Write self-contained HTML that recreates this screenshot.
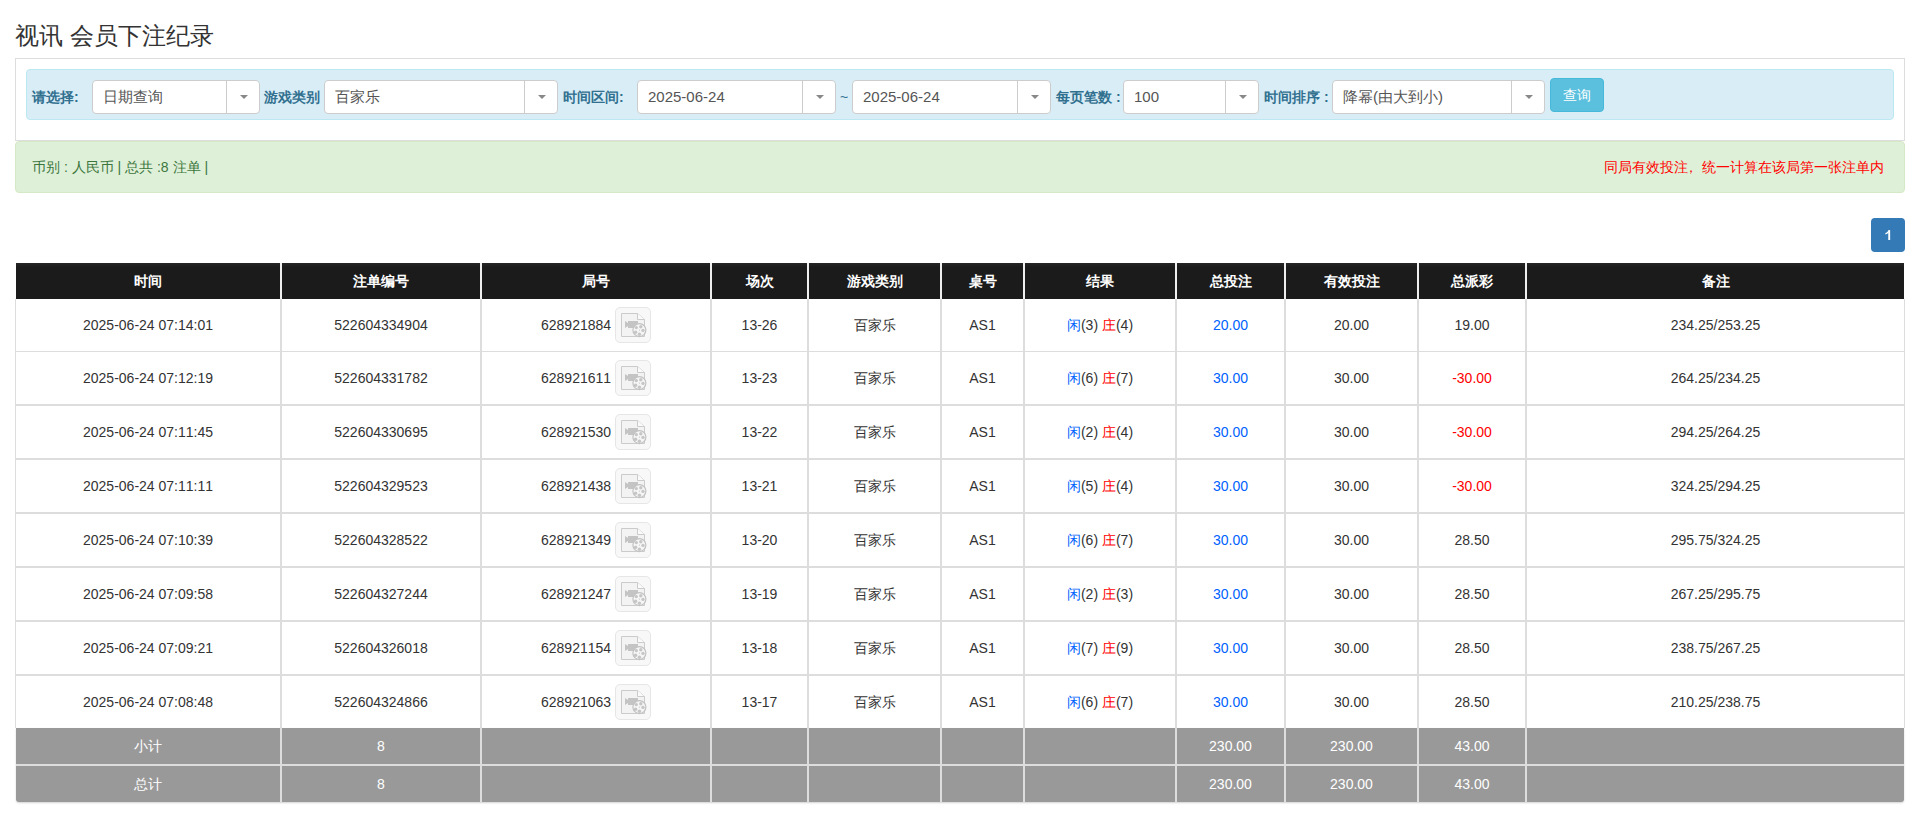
<!DOCTYPE html>
<html><head><meta charset="utf-8"><title>视讯 会员下注纪录</title>
<style>
html,body{margin:0;padding:0;background:#fff;}
body{width:1916px;height:828px;overflow:hidden;position:relative;font-family:"Liberation Sans",sans-serif;font-size:14px;color:#333;font-kerning:none;}
.abs{position:absolute;}
h3{position:absolute;left:15px;top:19px;margin:0;font-size:24px;font-weight:normal;line-height:34px;color:#333;white-space:nowrap;}
.panel{position:absolute;left:15px;top:58px;width:1888px;height:81px;border:1px solid #ddd;}
.bar{position:absolute;left:26px;top:69px;width:1866px;height:49px;border:1px solid #bce8f1;background:#d9edf7;border-radius:4px;}
.lbl{position:absolute;top:80px;height:34px;line-height:34px;font-weight:bold;color:#31708f;white-space:nowrap;}
.sel{position:absolute;top:80px;height:32px;border:1px solid #ccc;border-radius:4px;background:#fff;box-sizing:content-box;}
.sel .t{position:absolute;left:10px;top:0;line-height:32px;font-size:15px;color:#555;white-space:nowrap;}
.sel .d{position:absolute;right:32px;top:0;width:1px;height:32px;background:#ccc;}
.sel .a{position:absolute;right:11px;top:14px;width:0;height:0;border-left:4px solid transparent;border-right:4px solid transparent;border-top:4.5px solid #888;}
.btn{position:absolute;left:1550px;top:78px;width:52px;height:32px;border:1px solid #46b8da;background:#5bc0de;border-radius:4px;color:#fff;text-align:center;line-height:32px;}
.alert{position:absolute;left:15px;top:141px;width:1888px;height:50px;border:1px solid #d6e9c6;background:#dff0d8;border-radius:4px;color:#3c763d;line-height:50px;}
.alert .l{position:absolute;left:16px;top:0;white-space:nowrap;}
.alert .r{position:absolute;right:20px;top:0;color:#f00;white-space:nowrap;}
.page{position:absolute;left:1871px;top:218px;width:34px;height:34px;background:#337ab7;border-radius:4px;color:#fff;font-size:14px;-webkit-text-stroke:0.5px #fff;text-align:center;line-height:34px;}
.tbl{position:absolute;left:15px;top:263px;width:1890px;height:539px;}
.c{position:absolute;text-align:center;white-space:nowrap;}
.h{background:#1c1c1c;color:#fff;font-weight:bold;}
.g{background:#999;color:#fff;}
.hh{color:#fff;font-weight:bold;}
.gw{color:#fff;}
.ico{display:inline-block;vertical-align:middle;width:36px;height:36px;box-sizing:border-box;border:1px solid #e6e6e6;border-radius:5px;background:#f8f8f8;position:relative;top:-1px;}
.ico svg{position:absolute;left:-1px;top:-1px;}
.bl{color:#0062ff;}
.rd{color:#f00;}
</style></head><body>
<h3>视讯 会员下注纪录</h3>
<div class="panel"></div>
<div class="bar"></div>

<div class="lbl" style="left:32px">请选择:</div>
<div class="sel" style="left:92px;width:166px"><span class="t">日期查询</span><span class="d"></span><span class="a"></span></div>
<div class="lbl" style="left:264px">游戏类别</div>
<div class="sel" style="left:324px;width:232px"><span class="t">百家乐</span><span class="d"></span><span class="a"></span></div>
<div class="lbl" style="left:563px">时间区间:</div>
<div class="sel" style="left:637px;width:197px"><span class="t">2025-06-24</span><span class="d"></span><span class="a"></span></div>
<div class="lbl" style="left:840px;font-weight:normal">~</div>
<div class="sel" style="left:852px;width:197px"><span class="t">2025-06-24</span><span class="d"></span><span class="a"></span></div>
<div class="lbl" style="left:1056px">每页笔数 :</div>
<div class="sel" style="left:1123px;width:134px"><span class="t">100</span><span class="d"></span><span class="a"></span></div>
<div class="lbl" style="left:1264px">时间排序 :</div>
<div class="sel" style="left:1332px;width:211px"><span class="t">降幂(由大到小)</span><span class="d"></span><span class="a"></span></div>
<div class="btn">查询</div>
<div class="alert"><span class="l">币别 : 人民币 | 总共 :8 注单 |</span><span class="r">同局有效投注<span style="position:relative;left:-4px">，</span>统一计算在该局第一张注单内</span></div>
<div class="page"><svg width="34" height="34" style="position:absolute;left:0;top:0"><path d="M18.2 12.2V22" stroke="#fff" stroke-width="1.9" fill="none"/><path d="M19 12.1l-1.5 0.3c-0.6 1.2-1.8 2.1-3.1 2.6v1.5c1.3-0.4 2.4-1.1 3.3-2z" fill="#fff"/></svg></div>
<div class="abs" style="left:15px;top:299px;width:1px;height:429px;background:#ddd"></div>
<div class="abs" style="left:1904px;top:299px;width:1px;height:429px;background:#ddd"></div>
<div class="abs" style="left:16px;top:263px;width:1888px;height:36px;background:linear-gradient(#262626,#1b1b1b 4px)"></div>
<div class="c hh" style="left:16px;top:263px;width:264px;height:36px;line-height:36px">时间</div>
<div class="c hh" style="left:282px;top:263px;width:198px;height:36px;line-height:36px">注单编号</div>
<div class="c hh" style="left:482px;top:263px;width:228px;height:36px;line-height:36px">局号</div>
<div class="c hh" style="left:712px;top:263px;width:95px;height:36px;line-height:36px">场次</div>
<div class="c hh" style="left:809px;top:263px;width:131px;height:36px;line-height:36px">游戏类别</div>
<div class="c hh" style="left:942px;top:263px;width:81px;height:36px;line-height:36px">桌号</div>
<div class="c hh" style="left:1025px;top:263px;width:150px;height:36px;line-height:36px">结果</div>
<div class="c hh" style="left:1177px;top:263px;width:107px;height:36px;line-height:36px">总投注</div>
<div class="c hh" style="left:1286px;top:263px;width:131px;height:36px;line-height:36px">有效投注</div>
<div class="c hh" style="left:1419px;top:263px;width:106px;height:36px;line-height:36px">总派彩</div>
<div class="c hh" style="left:1527px;top:263px;width:377px;height:36px;line-height:36px">备注</div>
<div class="abs" style="left:280px;top:263px;width:2px;height:36px;background:#efefef"></div>
<div class="abs" style="left:480px;top:263px;width:2px;height:36px;background:#efefef"></div>
<div class="abs" style="left:710px;top:263px;width:2px;height:36px;background:#efefef"></div>
<div class="abs" style="left:807px;top:263px;width:2px;height:36px;background:#efefef"></div>
<div class="abs" style="left:940px;top:263px;width:2px;height:36px;background:#efefef"></div>
<div class="abs" style="left:1023px;top:263px;width:2px;height:36px;background:#efefef"></div>
<div class="abs" style="left:1175px;top:263px;width:2px;height:36px;background:#efefef"></div>
<div class="abs" style="left:1284px;top:263px;width:2px;height:36px;background:#efefef"></div>
<div class="abs" style="left:1417px;top:263px;width:2px;height:36px;background:#efefef"></div>
<div class="abs" style="left:1525px;top:263px;width:2px;height:36px;background:#efefef"></div>
<div class="abs" style="left:16px;top:351px;width:1888px;height:1px;background:#ddd"></div>
<div class="abs" style="left:16px;top:404px;width:1888px;height:2px;background:#ddd"></div>
<div class="abs" style="left:16px;top:458px;width:1888px;height:2px;background:#ddd"></div>
<div class="abs" style="left:16px;top:512px;width:1888px;height:2px;background:#ddd"></div>
<div class="abs" style="left:16px;top:566px;width:1888px;height:2px;background:#ddd"></div>
<div class="abs" style="left:16px;top:620px;width:1888px;height:2px;background:#ddd"></div>
<div class="abs" style="left:16px;top:674px;width:1888px;height:2px;background:#ddd"></div>
<div class="abs" style="left:280px;top:299px;width:2px;height:429px;background:#ddd"></div>
<div class="abs" style="left:480px;top:299px;width:2px;height:429px;background:#ddd"></div>
<div class="abs" style="left:710px;top:299px;width:2px;height:429px;background:#ddd"></div>
<div class="abs" style="left:807px;top:299px;width:2px;height:429px;background:#ddd"></div>
<div class="abs" style="left:940px;top:299px;width:2px;height:429px;background:#ddd"></div>
<div class="abs" style="left:1023px;top:299px;width:2px;height:429px;background:#ddd"></div>
<div class="abs" style="left:1175px;top:299px;width:2px;height:429px;background:#ddd"></div>
<div class="abs" style="left:1284px;top:299px;width:2px;height:429px;background:#ddd"></div>
<div class="abs" style="left:1417px;top:299px;width:2px;height:429px;background:#ddd"></div>
<div class="abs" style="left:1525px;top:299px;width:2px;height:429px;background:#ddd"></div>
<div class="c " style="left:16px;top:299px;width:264px;height:52px;line-height:52px">2025-06-24 07:14:01</div>
<div class="c " style="left:282px;top:299px;width:198px;height:52px;line-height:52px">522604334904</div>
<div class="c " style="left:482px;top:299px;width:228px;height:52px;line-height:52px">628921884 <span class="ico"><svg width="36" height="36" viewBox="0 0 36 36"><path d="M6.5 6.5h16l7 6v17h-23z" fill="#f3f3f3" stroke="#cbcbcb" stroke-width="1"/><path d="M22.5 6.5v6h7" fill="#fafafa" stroke="#cbcbcb" stroke-width="1"/><path d="M10 14l3 2v-2h10v7h-10v-2l-3 2z" fill="#c4c4c4"/><circle cx="24.4" cy="23.1" r="6.5" fill="#f6f6f6" stroke="#c2c2c2" stroke-width="1.2"/><circle cx="21.3" cy="20.6" r="1.7" fill="#c6c6c6"/><circle cx="25.8" cy="19.8" r="1.7" fill="#c6c6c6"/><circle cx="28" cy="23.4" r="1.7" fill="#c6c6c6"/><circle cx="24.4" cy="27.2" r="1.7" fill="#c6c6c6"/><circle cx="20.6" cy="25.2" r="1.7" fill="#c6c6c6"/><circle cx="24.4" cy="23.1" r="0.6" fill="#c4c4c4"/></svg></span></div>
<div class="c " style="left:712px;top:299px;width:95px;height:52px;line-height:52px">13-26</div>
<div class="c " style="left:809px;top:299px;width:131px;height:52px;line-height:52px">百家乐</div>
<div class="c " style="left:942px;top:299px;width:81px;height:52px;line-height:52px">AS1</div>
<div class="c " style="left:1025px;top:299px;width:150px;height:52px;line-height:52px"><span class="bl">闲</span>(3) <span class="rd">庄</span>(4)</div>
<div class="c " style="left:1177px;top:299px;width:107px;height:52px;line-height:52px"><span class="bl">20.00</span></div>
<div class="c " style="left:1286px;top:299px;width:131px;height:52px;line-height:52px">20.00</div>
<div class="c " style="left:1419px;top:299px;width:106px;height:52px;line-height:52px">19.00</div>
<div class="c " style="left:1527px;top:299px;width:377px;height:52px;line-height:52px">234.25/253.25</div>
<div class="c " style="left:16px;top:352px;width:264px;height:52px;line-height:52px">2025-06-24 07:12:19</div>
<div class="c " style="left:282px;top:352px;width:198px;height:52px;line-height:52px">522604331782</div>
<div class="c " style="left:482px;top:352px;width:228px;height:52px;line-height:52px">628921611 <span class="ico"><svg width="36" height="36" viewBox="0 0 36 36"><path d="M6.5 6.5h16l7 6v17h-23z" fill="#f3f3f3" stroke="#cbcbcb" stroke-width="1"/><path d="M22.5 6.5v6h7" fill="#fafafa" stroke="#cbcbcb" stroke-width="1"/><path d="M10 14l3 2v-2h10v7h-10v-2l-3 2z" fill="#c4c4c4"/><circle cx="24.4" cy="23.1" r="6.5" fill="#f6f6f6" stroke="#c2c2c2" stroke-width="1.2"/><circle cx="21.3" cy="20.6" r="1.7" fill="#c6c6c6"/><circle cx="25.8" cy="19.8" r="1.7" fill="#c6c6c6"/><circle cx="28" cy="23.4" r="1.7" fill="#c6c6c6"/><circle cx="24.4" cy="27.2" r="1.7" fill="#c6c6c6"/><circle cx="20.6" cy="25.2" r="1.7" fill="#c6c6c6"/><circle cx="24.4" cy="23.1" r="0.6" fill="#c4c4c4"/></svg></span></div>
<div class="c " style="left:712px;top:352px;width:95px;height:52px;line-height:52px">13-23</div>
<div class="c " style="left:809px;top:352px;width:131px;height:52px;line-height:52px">百家乐</div>
<div class="c " style="left:942px;top:352px;width:81px;height:52px;line-height:52px">AS1</div>
<div class="c " style="left:1025px;top:352px;width:150px;height:52px;line-height:52px"><span class="bl">闲</span>(6) <span class="rd">庄</span>(7)</div>
<div class="c " style="left:1177px;top:352px;width:107px;height:52px;line-height:52px"><span class="bl">30.00</span></div>
<div class="c " style="left:1286px;top:352px;width:131px;height:52px;line-height:52px">30.00</div>
<div class="c " style="left:1419px;top:352px;width:106px;height:52px;line-height:52px"><span class="rd">-30.00</span></div>
<div class="c " style="left:1527px;top:352px;width:377px;height:52px;line-height:52px">264.25/234.25</div>
<div class="c " style="left:16px;top:406px;width:264px;height:52px;line-height:52px">2025-06-24 07:11:45</div>
<div class="c " style="left:282px;top:406px;width:198px;height:52px;line-height:52px">522604330695</div>
<div class="c " style="left:482px;top:406px;width:228px;height:52px;line-height:52px">628921530 <span class="ico"><svg width="36" height="36" viewBox="0 0 36 36"><path d="M6.5 6.5h16l7 6v17h-23z" fill="#f3f3f3" stroke="#cbcbcb" stroke-width="1"/><path d="M22.5 6.5v6h7" fill="#fafafa" stroke="#cbcbcb" stroke-width="1"/><path d="M10 14l3 2v-2h10v7h-10v-2l-3 2z" fill="#c4c4c4"/><circle cx="24.4" cy="23.1" r="6.5" fill="#f6f6f6" stroke="#c2c2c2" stroke-width="1.2"/><circle cx="21.3" cy="20.6" r="1.7" fill="#c6c6c6"/><circle cx="25.8" cy="19.8" r="1.7" fill="#c6c6c6"/><circle cx="28" cy="23.4" r="1.7" fill="#c6c6c6"/><circle cx="24.4" cy="27.2" r="1.7" fill="#c6c6c6"/><circle cx="20.6" cy="25.2" r="1.7" fill="#c6c6c6"/><circle cx="24.4" cy="23.1" r="0.6" fill="#c4c4c4"/></svg></span></div>
<div class="c " style="left:712px;top:406px;width:95px;height:52px;line-height:52px">13-22</div>
<div class="c " style="left:809px;top:406px;width:131px;height:52px;line-height:52px">百家乐</div>
<div class="c " style="left:942px;top:406px;width:81px;height:52px;line-height:52px">AS1</div>
<div class="c " style="left:1025px;top:406px;width:150px;height:52px;line-height:52px"><span class="bl">闲</span>(2) <span class="rd">庄</span>(4)</div>
<div class="c " style="left:1177px;top:406px;width:107px;height:52px;line-height:52px"><span class="bl">30.00</span></div>
<div class="c " style="left:1286px;top:406px;width:131px;height:52px;line-height:52px">30.00</div>
<div class="c " style="left:1419px;top:406px;width:106px;height:52px;line-height:52px"><span class="rd">-30.00</span></div>
<div class="c " style="left:1527px;top:406px;width:377px;height:52px;line-height:52px">294.25/264.25</div>
<div class="c " style="left:16px;top:460px;width:264px;height:52px;line-height:52px">2025-06-24 07:11:11</div>
<div class="c " style="left:282px;top:460px;width:198px;height:52px;line-height:52px">522604329523</div>
<div class="c " style="left:482px;top:460px;width:228px;height:52px;line-height:52px">628921438 <span class="ico"><svg width="36" height="36" viewBox="0 0 36 36"><path d="M6.5 6.5h16l7 6v17h-23z" fill="#f3f3f3" stroke="#cbcbcb" stroke-width="1"/><path d="M22.5 6.5v6h7" fill="#fafafa" stroke="#cbcbcb" stroke-width="1"/><path d="M10 14l3 2v-2h10v7h-10v-2l-3 2z" fill="#c4c4c4"/><circle cx="24.4" cy="23.1" r="6.5" fill="#f6f6f6" stroke="#c2c2c2" stroke-width="1.2"/><circle cx="21.3" cy="20.6" r="1.7" fill="#c6c6c6"/><circle cx="25.8" cy="19.8" r="1.7" fill="#c6c6c6"/><circle cx="28" cy="23.4" r="1.7" fill="#c6c6c6"/><circle cx="24.4" cy="27.2" r="1.7" fill="#c6c6c6"/><circle cx="20.6" cy="25.2" r="1.7" fill="#c6c6c6"/><circle cx="24.4" cy="23.1" r="0.6" fill="#c4c4c4"/></svg></span></div>
<div class="c " style="left:712px;top:460px;width:95px;height:52px;line-height:52px">13-21</div>
<div class="c " style="left:809px;top:460px;width:131px;height:52px;line-height:52px">百家乐</div>
<div class="c " style="left:942px;top:460px;width:81px;height:52px;line-height:52px">AS1</div>
<div class="c " style="left:1025px;top:460px;width:150px;height:52px;line-height:52px"><span class="bl">闲</span>(5) <span class="rd">庄</span>(4)</div>
<div class="c " style="left:1177px;top:460px;width:107px;height:52px;line-height:52px"><span class="bl">30.00</span></div>
<div class="c " style="left:1286px;top:460px;width:131px;height:52px;line-height:52px">30.00</div>
<div class="c " style="left:1419px;top:460px;width:106px;height:52px;line-height:52px"><span class="rd">-30.00</span></div>
<div class="c " style="left:1527px;top:460px;width:377px;height:52px;line-height:52px">324.25/294.25</div>
<div class="c " style="left:16px;top:514px;width:264px;height:52px;line-height:52px">2025-06-24 07:10:39</div>
<div class="c " style="left:282px;top:514px;width:198px;height:52px;line-height:52px">522604328522</div>
<div class="c " style="left:482px;top:514px;width:228px;height:52px;line-height:52px">628921349 <span class="ico"><svg width="36" height="36" viewBox="0 0 36 36"><path d="M6.5 6.5h16l7 6v17h-23z" fill="#f3f3f3" stroke="#cbcbcb" stroke-width="1"/><path d="M22.5 6.5v6h7" fill="#fafafa" stroke="#cbcbcb" stroke-width="1"/><path d="M10 14l3 2v-2h10v7h-10v-2l-3 2z" fill="#c4c4c4"/><circle cx="24.4" cy="23.1" r="6.5" fill="#f6f6f6" stroke="#c2c2c2" stroke-width="1.2"/><circle cx="21.3" cy="20.6" r="1.7" fill="#c6c6c6"/><circle cx="25.8" cy="19.8" r="1.7" fill="#c6c6c6"/><circle cx="28" cy="23.4" r="1.7" fill="#c6c6c6"/><circle cx="24.4" cy="27.2" r="1.7" fill="#c6c6c6"/><circle cx="20.6" cy="25.2" r="1.7" fill="#c6c6c6"/><circle cx="24.4" cy="23.1" r="0.6" fill="#c4c4c4"/></svg></span></div>
<div class="c " style="left:712px;top:514px;width:95px;height:52px;line-height:52px">13-20</div>
<div class="c " style="left:809px;top:514px;width:131px;height:52px;line-height:52px">百家乐</div>
<div class="c " style="left:942px;top:514px;width:81px;height:52px;line-height:52px">AS1</div>
<div class="c " style="left:1025px;top:514px;width:150px;height:52px;line-height:52px"><span class="bl">闲</span>(6) <span class="rd">庄</span>(7)</div>
<div class="c " style="left:1177px;top:514px;width:107px;height:52px;line-height:52px"><span class="bl">30.00</span></div>
<div class="c " style="left:1286px;top:514px;width:131px;height:52px;line-height:52px">30.00</div>
<div class="c " style="left:1419px;top:514px;width:106px;height:52px;line-height:52px">28.50</div>
<div class="c " style="left:1527px;top:514px;width:377px;height:52px;line-height:52px">295.75/324.25</div>
<div class="c " style="left:16px;top:568px;width:264px;height:52px;line-height:52px">2025-06-24 07:09:58</div>
<div class="c " style="left:282px;top:568px;width:198px;height:52px;line-height:52px">522604327244</div>
<div class="c " style="left:482px;top:568px;width:228px;height:52px;line-height:52px">628921247 <span class="ico"><svg width="36" height="36" viewBox="0 0 36 36"><path d="M6.5 6.5h16l7 6v17h-23z" fill="#f3f3f3" stroke="#cbcbcb" stroke-width="1"/><path d="M22.5 6.5v6h7" fill="#fafafa" stroke="#cbcbcb" stroke-width="1"/><path d="M10 14l3 2v-2h10v7h-10v-2l-3 2z" fill="#c4c4c4"/><circle cx="24.4" cy="23.1" r="6.5" fill="#f6f6f6" stroke="#c2c2c2" stroke-width="1.2"/><circle cx="21.3" cy="20.6" r="1.7" fill="#c6c6c6"/><circle cx="25.8" cy="19.8" r="1.7" fill="#c6c6c6"/><circle cx="28" cy="23.4" r="1.7" fill="#c6c6c6"/><circle cx="24.4" cy="27.2" r="1.7" fill="#c6c6c6"/><circle cx="20.6" cy="25.2" r="1.7" fill="#c6c6c6"/><circle cx="24.4" cy="23.1" r="0.6" fill="#c4c4c4"/></svg></span></div>
<div class="c " style="left:712px;top:568px;width:95px;height:52px;line-height:52px">13-19</div>
<div class="c " style="left:809px;top:568px;width:131px;height:52px;line-height:52px">百家乐</div>
<div class="c " style="left:942px;top:568px;width:81px;height:52px;line-height:52px">AS1</div>
<div class="c " style="left:1025px;top:568px;width:150px;height:52px;line-height:52px"><span class="bl">闲</span>(2) <span class="rd">庄</span>(3)</div>
<div class="c " style="left:1177px;top:568px;width:107px;height:52px;line-height:52px"><span class="bl">30.00</span></div>
<div class="c " style="left:1286px;top:568px;width:131px;height:52px;line-height:52px">30.00</div>
<div class="c " style="left:1419px;top:568px;width:106px;height:52px;line-height:52px">28.50</div>
<div class="c " style="left:1527px;top:568px;width:377px;height:52px;line-height:52px">267.25/295.75</div>
<div class="c " style="left:16px;top:622px;width:264px;height:52px;line-height:52px">2025-06-24 07:09:21</div>
<div class="c " style="left:282px;top:622px;width:198px;height:52px;line-height:52px">522604326018</div>
<div class="c " style="left:482px;top:622px;width:228px;height:52px;line-height:52px">628921154 <span class="ico"><svg width="36" height="36" viewBox="0 0 36 36"><path d="M6.5 6.5h16l7 6v17h-23z" fill="#f3f3f3" stroke="#cbcbcb" stroke-width="1"/><path d="M22.5 6.5v6h7" fill="#fafafa" stroke="#cbcbcb" stroke-width="1"/><path d="M10 14l3 2v-2h10v7h-10v-2l-3 2z" fill="#c4c4c4"/><circle cx="24.4" cy="23.1" r="6.5" fill="#f6f6f6" stroke="#c2c2c2" stroke-width="1.2"/><circle cx="21.3" cy="20.6" r="1.7" fill="#c6c6c6"/><circle cx="25.8" cy="19.8" r="1.7" fill="#c6c6c6"/><circle cx="28" cy="23.4" r="1.7" fill="#c6c6c6"/><circle cx="24.4" cy="27.2" r="1.7" fill="#c6c6c6"/><circle cx="20.6" cy="25.2" r="1.7" fill="#c6c6c6"/><circle cx="24.4" cy="23.1" r="0.6" fill="#c4c4c4"/></svg></span></div>
<div class="c " style="left:712px;top:622px;width:95px;height:52px;line-height:52px">13-18</div>
<div class="c " style="left:809px;top:622px;width:131px;height:52px;line-height:52px">百家乐</div>
<div class="c " style="left:942px;top:622px;width:81px;height:52px;line-height:52px">AS1</div>
<div class="c " style="left:1025px;top:622px;width:150px;height:52px;line-height:52px"><span class="bl">闲</span>(7) <span class="rd">庄</span>(9)</div>
<div class="c " style="left:1177px;top:622px;width:107px;height:52px;line-height:52px"><span class="bl">30.00</span></div>
<div class="c " style="left:1286px;top:622px;width:131px;height:52px;line-height:52px">30.00</div>
<div class="c " style="left:1419px;top:622px;width:106px;height:52px;line-height:52px">28.50</div>
<div class="c " style="left:1527px;top:622px;width:377px;height:52px;line-height:52px">238.75/267.25</div>
<div class="c " style="left:16px;top:676px;width:264px;height:52px;line-height:52px">2025-06-24 07:08:48</div>
<div class="c " style="left:282px;top:676px;width:198px;height:52px;line-height:52px">522604324866</div>
<div class="c " style="left:482px;top:676px;width:228px;height:52px;line-height:52px">628921063 <span class="ico"><svg width="36" height="36" viewBox="0 0 36 36"><path d="M6.5 6.5h16l7 6v17h-23z" fill="#f3f3f3" stroke="#cbcbcb" stroke-width="1"/><path d="M22.5 6.5v6h7" fill="#fafafa" stroke="#cbcbcb" stroke-width="1"/><path d="M10 14l3 2v-2h10v7h-10v-2l-3 2z" fill="#c4c4c4"/><circle cx="24.4" cy="23.1" r="6.5" fill="#f6f6f6" stroke="#c2c2c2" stroke-width="1.2"/><circle cx="21.3" cy="20.6" r="1.7" fill="#c6c6c6"/><circle cx="25.8" cy="19.8" r="1.7" fill="#c6c6c6"/><circle cx="28" cy="23.4" r="1.7" fill="#c6c6c6"/><circle cx="24.4" cy="27.2" r="1.7" fill="#c6c6c6"/><circle cx="20.6" cy="25.2" r="1.7" fill="#c6c6c6"/><circle cx="24.4" cy="23.1" r="0.6" fill="#c4c4c4"/></svg></span></div>
<div class="c " style="left:712px;top:676px;width:95px;height:52px;line-height:52px">13-17</div>
<div class="c " style="left:809px;top:676px;width:131px;height:52px;line-height:52px">百家乐</div>
<div class="c " style="left:942px;top:676px;width:81px;height:52px;line-height:52px">AS1</div>
<div class="c " style="left:1025px;top:676px;width:150px;height:52px;line-height:52px"><span class="bl">闲</span>(6) <span class="rd">庄</span>(7)</div>
<div class="c " style="left:1177px;top:676px;width:107px;height:52px;line-height:52px"><span class="bl">30.00</span></div>
<div class="c " style="left:1286px;top:676px;width:131px;height:52px;line-height:52px">30.00</div>
<div class="c " style="left:1419px;top:676px;width:106px;height:52px;line-height:52px">28.50</div>
<div class="c " style="left:1527px;top:676px;width:377px;height:52px;line-height:52px">210.25/238.75</div>
<div class="abs" style="left:16px;top:728px;width:1888px;height:74px;background:#999;border-radius:0 0 3px 3px;box-shadow:0 1px 2px rgba(0,0,0,.18)"></div>
<div class="abs" style="left:16px;top:764px;width:1888px;height:2px;background:#ddd"></div>
<div class="abs" style="left:280px;top:728px;width:2px;height:74px;background:#ddd"></div>
<div class="abs" style="left:480px;top:728px;width:2px;height:74px;background:#ddd"></div>
<div class="abs" style="left:710px;top:728px;width:2px;height:74px;background:#ddd"></div>
<div class="abs" style="left:807px;top:728px;width:2px;height:74px;background:#ddd"></div>
<div class="abs" style="left:940px;top:728px;width:2px;height:74px;background:#ddd"></div>
<div class="abs" style="left:1023px;top:728px;width:2px;height:74px;background:#ddd"></div>
<div class="abs" style="left:1175px;top:728px;width:2px;height:74px;background:#ddd"></div>
<div class="abs" style="left:1284px;top:728px;width:2px;height:74px;background:#ddd"></div>
<div class="abs" style="left:1417px;top:728px;width:2px;height:74px;background:#ddd"></div>
<div class="abs" style="left:1525px;top:728px;width:2px;height:74px;background:#ddd"></div>
<div class="c gw" style="left:16px;top:728px;width:264px;height:36px;line-height:36px">小计</div>
<div class="c gw" style="left:282px;top:728px;width:198px;height:36px;line-height:36px">8</div>
<div class="c gw" style="left:1177px;top:728px;width:107px;height:36px;line-height:36px">230.00</div>
<div class="c gw" style="left:1286px;top:728px;width:131px;height:36px;line-height:36px">230.00</div>
<div class="c gw" style="left:1419px;top:728px;width:106px;height:36px;line-height:36px">43.00</div>
<div class="c gw" style="left:16px;top:766px;width:264px;height:36px;line-height:36px">总计</div>
<div class="c gw" style="left:282px;top:766px;width:198px;height:36px;line-height:36px">8</div>
<div class="c gw" style="left:1177px;top:766px;width:107px;height:36px;line-height:36px">230.00</div>
<div class="c gw" style="left:1286px;top:766px;width:131px;height:36px;line-height:36px">230.00</div>
<div class="c gw" style="left:1419px;top:766px;width:106px;height:36px;line-height:36px">43.00</div>
</body></html>
